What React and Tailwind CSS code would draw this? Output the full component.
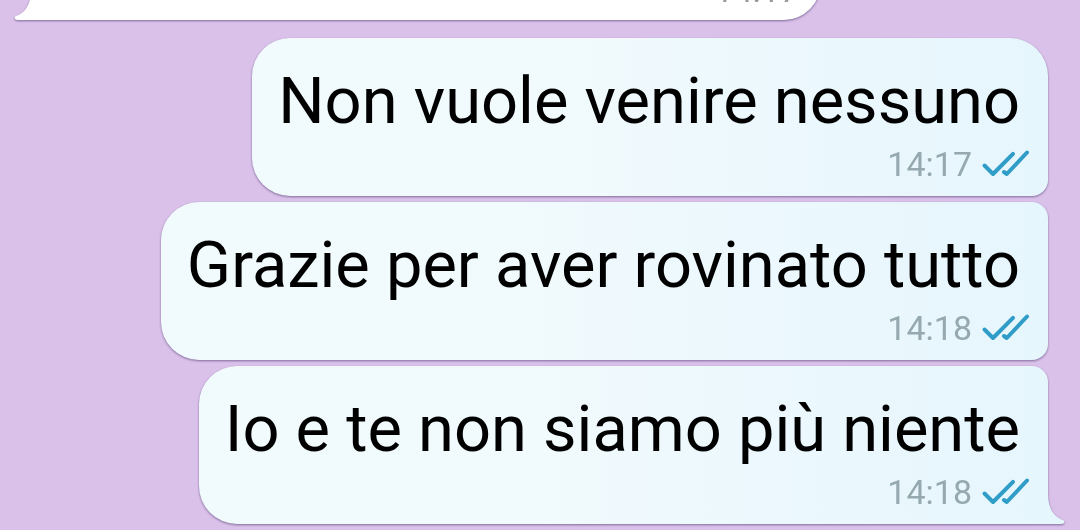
import React from "react";

const messages = [
  { id: 1, text: "Non vuole venire nessuno", time: "14:17" },
  { id: 2, text: "Grazie per aver rovinato tutto", time: "14:18" },
  { id: 3, text: "Io e te non siamo più niente", time: "14:18" },
];

const ReadChecks = () => (
  <svg
    role="img"
    aria-label="Read"
    className="w-[50px] h-7"
    viewBox="0 0 50 28"
    fill="none"
    stroke="#2f9dc7"
    strokeWidth="4"
    strokeLinecap="round"
    strokeLinejoin="round"
  >
    <path d="M4.5 15.5 L13 24 L33 3.8" />
    <path d="M24 22 L26.8 24 L47 2.5" />
  </svg>
);

const Tail = ({ side, color }) => (
  <svg
    aria-hidden="true"
    className={`absolute bottom-0 w-[17px] h-[30px] ${
      side === "right" ? "left-full" : "right-full -scale-x-100"
    }`}
    viewBox="0 0 17 30"
  >
    <path d="M0 0 C0 13 5 23 15 26 Q17 27 16 29 Q15 30 13 30 H0 Z" fill={color} />
  </svg>
);

const OutgoingMessage = ({ message, isFirst, isLast }) => (
  <li
    className={`relative self-end flex flex-col pt-[25px] pb-3 pl-[26px] rounded-l-[38px] bg-linear-to-r from-[#f1fafd] from-40% to-[#e6f6fd] drop-shadow-[0_1px_1px_rgba(80,60,110,0.65)] ${
      isFirst ? "rounded-tr-[38px]" : "rounded-tr-2xl"
    } ${isLast ? "" : "rounded-br-2xl"}`}
  >
    <p className="pr-7 text-[65px] leading-[76px] text-black whitespace-nowrap">{message.text}</p>
    <div className="flex items-center justify-end gap-2 pr-[18px] mt-[5px]">
      <time className="text-[34px] leading-10 text-[#96a9b0]">{message.time}</time>
      <ReadChecks />
    </div>
    {isLast && <Tail side="right" color="#e6f6fd" />}
  </li>
);

const App = () => (
  <main className="h-screen overflow-hidden bg-[#dac1ea] font-[Roboto,sans-serif]">
    <ul className="h-full flex flex-col justify-end gap-1.5 pl-[31px] pr-8 pb-1.5">
      <li className="relative self-start w-[790px] max-w-full flex justify-end pt-[25px] pb-2.5 pr-[22px] mb-3 rounded-tr-[38px] rounded-br-[38px] bg-white drop-shadow-[0_1px_1px_rgba(80,60,110,0.65)]">
        <time className="text-[34px] leading-10 text-[#9a9a9a]">14:17</time>
        <Tail side="left" color="#ffffff" />
      </li>
      {messages.map((message, index) => (
        <OutgoingMessage
          key={message.id}
          message={message}
          isFirst={index === 0}
          isLast={index === messages.length - 1}
        />
      ))}
    </ul>
  </main>
);

export default App;
